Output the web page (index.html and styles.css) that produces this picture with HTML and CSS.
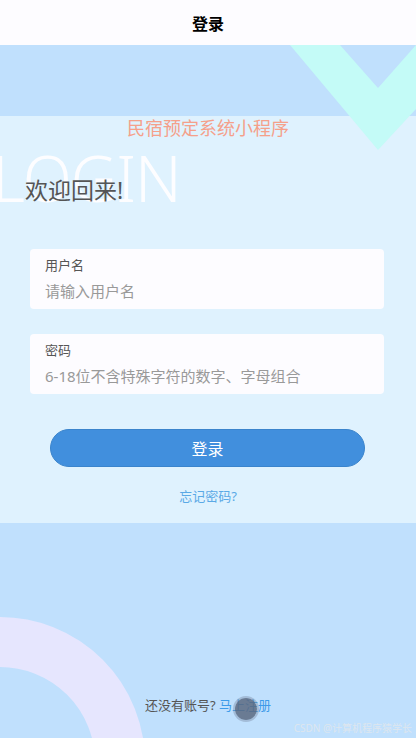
FILE: index.html
```html
<!DOCTYPE html>
<html lang="zh-CN">
<head>
  <meta charset="UTF-8"/>
  <meta name="viewport" content="width=device-width,initial-scale=1,user-scalable=no"/>
  <title>登录</title>
  <link rel="stylesheet" href="styles.css">
</head>
<body>

<header class="nav">登录</header>

<main class="page">
  <!-- decoration: chevron top right, ring bottom left -->
  <svg class="deco-v" width="126" height="106" viewBox="290 0 126 106">
    <polygon points="290,0 340,0 378,43 416,0 416,64 378,105" fill="#c4fbf7"/>
  </svg>
  <div class="deco-ring"></div>

  <section class="panel">
    <div class="app-name">民宿预定系统小程序</div>
    <div class="welcome">
      <span class="bg-word">LOGIN</span>
      <h1>欢迎回来!</h1>
    </div>

    <label class="field">
      <span class="field-label">用户名</span>
      <input type="text" placeholder="请输入用户名">
    </label>
    <label class="field">
      <span class="field-label">密码</span>
      <input type="password" placeholder="6-18位不含特殊字符的数字、字母组合">
    </label>

    <button class="btn-login">登录</button>
    <a class="forgot">忘记密码?</a>
  </section>

  <div class="register">还没有账号? <a>马上注册</a></div>
  <span class="touch"></span>
  <span class="mark">CSDN @计算机程序猿学长</span>
</main>

</body>
</html>
```

FILE: styles.css
```css
*{box-sizing:border-box;font-family:"Noto Sans","Noto Sans CJK SC",sans-serif}
body{margin:0;width:416px;height:738px;overflow:hidden;background:#c0e0fd;color:#555}
.nav{height:45px;background:#fdfcff;color:#000;font-size:16px;font-weight:700;display:flex;align-items:center;justify-content:center}
.page{position:relative;height:693px;overflow:hidden;display:flex;flex-direction:column}
.deco-v{position:absolute;top:0;right:0;z-index:1}
.deco-ring{position:absolute;left:-145px;top:572px;width:290px;height:290px;border-radius:50%;border:50px solid #e6e6fe}

.panel{margin-top:71px;height:407px;flex-shrink:0;background:#dff2fe;display:flex;flex-direction:column;position:relative}
.app-name{text-align:center;font-size:18px;line-height:24px;color:#f5a08a;position:relative;z-index:2}
.welcome{position:relative;margin-top:34px;height:32px}
.bg-word{position:absolute;left:-8px;top:-28px;font-size:64px;line-height:64px;font-weight:300;color:#fdfdff;letter-spacing:-1px}
.welcome h1{position:relative;margin:0 0 0 25px;font-size:23px;line-height:32px;font-weight:400;color:#555}

.field{margin:43px 32px 0 30px;padding:8px 15px 6px;background:#fdfcff;border-radius:4px;display:flex;flex-direction:column;gap:6px}
.field + .field{margin-top:25px}
.field-label{font-size:13px;line-height:16px;color:#555}
.field input{border:none;background:transparent;padding:0;margin:0;outline:none;font-size:15px;line-height:24px;height:24px;color:#333}
.field input::placeholder{color:#999}

.btn-login{margin:35px 51px 0 50px;height:38px;border:1px solid #3a84cc;border-radius:19px;background:#418fdd;color:#fff;font-size:16px;padding:0}
.forgot{margin-top:19px;text-align:center;font-size:13px;line-height:20px;color:#5aa9e6}

.register{margin-top:auto;margin-bottom:23px;text-align:center;font-size:13px;line-height:20px;color:#555;position:relative}
.register a{color:#3d9be9}
.touch{position:absolute;left:235px;top:653px;width:22px;height:22px;border-radius:50%;background:rgba(90,104,128,.85);box-shadow:0 0 0 2px rgba(120,135,160,.4)}
.mark{position:absolute;right:4px;bottom:3px;font-size:10px;line-height:14px;color:#dde6ef}
```
